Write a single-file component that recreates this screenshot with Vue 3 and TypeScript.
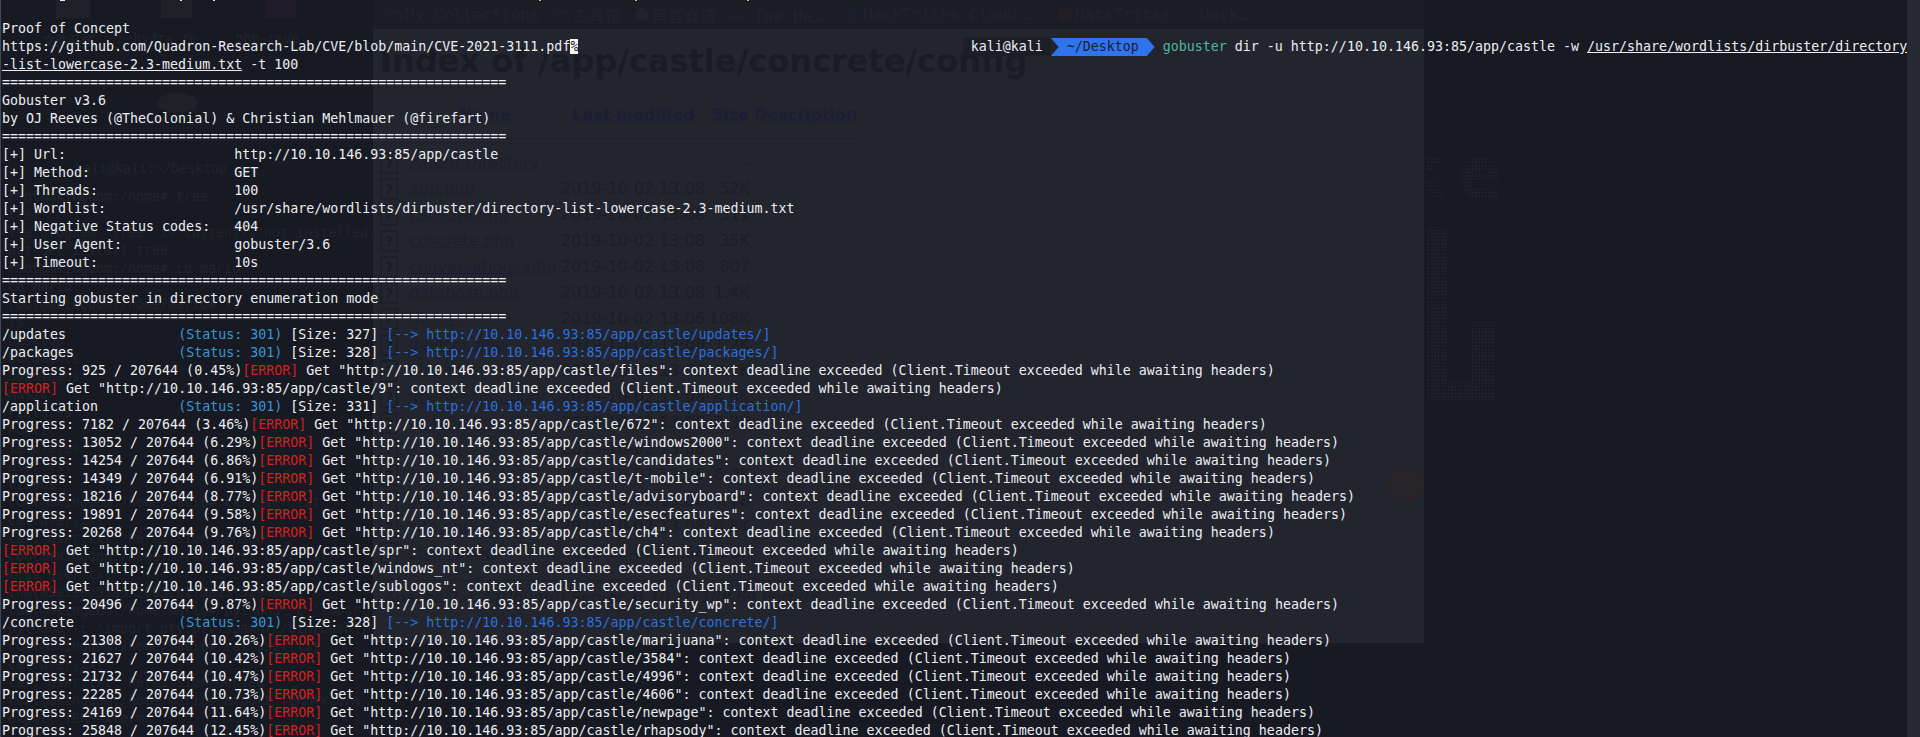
<script setup lang="ts">
type Seg = { c: string; t: string };
type Line = Seg[];

const rule = "=".repeat(63);
const plain = (t: string): Line => [{ c: "", t }];
const base = "http://10.10.146.93:85/app/castle";

const found = (name: string, size: number): Line => [
  { c: "", t: name.padEnd(22) },
  { c: "st", t: "(Status: 301)" },
  { c: "", t: ` [Size: ${size}] ` },
  { c: "lk", t: `[--> ${base}/${name.slice(1)}/]` },
];
const tail = (p: string) =>
  ` Get "${base}/${p}": context deadline exceeded (Client.Timeout exceeded while awaiting headers)`;
const err = (p: string): Line => [{ c: "er", t: "[ERROR]" }, { c: "", t: tail(p) }];
const prog = (n: number, pct: string, p: string): Line => [
  { c: "", t: `Progress: ${n} / 207644 (${pct}%)` },
  ...err(p),
];

const afterPrompt: Line[] = [
  [
    { c: "ul", t: "-list-lowercase-2.3-medium.txt" },
    { c: "", t: " -t 100" },
  ],
  plain(rule),
  plain("Gobuster v3.6"),
  plain("by OJ Reeves (@TheColonial) & Christian Mehlmauer (@firefart)"),
  plain(rule),
  plain("[+] Url:                     " + base),
  plain("[+] Method:                  GET"),
  plain("[+] Threads:                 100"),
  plain("[+] Wordlist:                /usr/share/wordlists/dirbuster/directory-list-lowercase-2.3-medium.txt"),
  plain("[+] Negative Status codes:   404"),
  plain("[+] User Agent:              gobuster/3.6"),
  plain("[+] Timeout:                 10s"),
  plain(rule),
  plain("Starting gobuster in directory enumeration mode"),
  plain(rule),
  found("/updates", 327),
  found("/packages", 328),
  prog(925, "0.45", "files"),
  err("9"),
  found("/application", 331),
  prog(7182, "3.46", "672"),
  prog(13052, "6.29", "windows2000"),
  prog(14254, "6.86", "candidates"),
  prog(14349, "6.91", "t-mobile"),
  prog(18216, "8.77", "advisoryboard"),
  prog(19891, "9.58", "esecfeatures"),
  prog(20268, "9.76", "ch4"),
  err("spr"),
  err("windows_nt"),
  err("sublogos"),
  prog(20496, "9.87", "security_wp"),
  found("/concrete", 328),
  prog(21308, "10.26", "marijuana"),
  prog(21627, "10.42", "3584"),
  prog(21732, "10.47", "4996"),
  prog(22285, "10.73", "4606"),
  prog(24169, "11.64", "newpage"),
  prog(25848, "12.45", "rhapsody"),
];

const ghostTerm: string[] = [
  "root@mkingdom:/home# tree",
  "tree",
  "The program 'tree' is currently not installed. You can",
  "apt-get install tree",
  "root@mkingdom:/home# cd mario",
  "cd mario",
  "root@mkingdom:/home/mario# ls",
  "ls",
  "Desktop",
  "Documents",
  "Downloads",
  "Music",
  "Pictures",
  "Public",
  "Templates",
  "user.txt",
  "Videos",
  "root@mkingdom:/home/mario# cat user.txt",
  "cat user.txt",
  "cat: user.txt: Permission denied",
  "root@mkingdom:/home/mario# less user.txt",
  "less user.txt",
  "thm{03a1e0b91a5f26b52b1f0a13f5294b6c}",
  "root@mkingdom:/home/mario# python3 -c 'import",
  "python3 -c 'import pty;pty.spawn(\"/bin/bash\")'",
  "root@mkingdom:/home/mario# cat user.txt",
  "cat user.txt",
  "cat: user.txt: Permission denied",
  "root@mkingdom:/home/mario# export TERM=xterm",
  "export TERM=xterm",
];

const rows: [string, string, string][] = [
  ["Parent Directory", "", "-"],
  ["app.php", "2019-10-02 13:08", "52K"],
  ["captcha.php", "2019-10-02 13:08", "311"],
  ["concrete.php", "2019-10-02 13:08", "35K"],
  ["conversations.php", "2019-10-02 13:08", "807"],
  ["database.php", "2019-10-02 13:08", "1.4K"],
  ["db.xml", "2019-10-02 13:06", "108K"],
  ["devices.php", "2019-10-02 13:08", "1.2K"],
  ["files.php", "2019-10-02 13:08", "2.1K"],
  ["imageeditor.php", "2019-10-02 13:08", "4.8K"],
  ["install.php", "2019-10-02 13:08", "2.3K"],
  ["install/", "2019-10-02 13:08", "-"],
  ["mime.ico", "2019-10-02 13:06", "6.4K"],
  ["services.php", "2019-10-02 13:08", "128"],
  ["site.php", "2019-10-02 13:08", "6.8K"],
  ["stacks.php", "2019-10-02 13:08", "107"],
];

const frags: { x: number; w: number; col: string }[] = [
  { x: 60, w: 5, col: "#e9ebef" },
  { x: 180, w: 2, col: "#e9ebef" },
  { x: 213, w: 2, col: "#e9ebef" },
  { x: 539, w: 2, col: "#e6b070" },
  { x: 635, w: 2, col: "#e6b070" },
  { x: 747, w: 2, col: "#e6b070" },
];
</script>

<template>
  <div class="desk">
    <!-- faint windows behind the translucent terminal -->
    <div class="wallpaper">
      <span class="sc sc1"></span>
      <span class="sc sc2"></span>
      <span class="sc sc3"></span>
      <span class="sc sc4"></span>
      <div class="sc-labels"><span>文件系统</span><span>hydra_re</span><span>php-reve</span></div>
    </div>

    <svg class="art" width="100" height="260" viewBox="0 0 100 260" aria-hidden="true">
      <defs>
        <pattern id="dots" width="3.4" height="3.4" patternUnits="userSpaceOnUse">
          <rect x="0" y="0" width="1.7" height="1.7" fill="#21242c" />
        </pattern>
      </defs>
      <path fill="url(#dots)" d="M3 0h14v7H9v6H3zM3 24h8l7 10v6h-6L3 30zM42 3c6-4 22-4 30 0l3 8v13H48v6l27 2v6c-10 3-25 3-31 0l-6-10V12zM49 12v5h15v-5z" />
      <path fill="url(#dots)" d="M2 69H24V222H46V164H70V242H2Z" />
    </svg>

    <div class="ghost-term">
      <div class="gt-title">kali@kali:~/Desktop</div>
      <div v-for="(l, i) in ghostTerm" :key="i" class="gt-line">{{ l }}</div>
    </div>

    <div class="browser">
      <div class="bookmarks">
        <span class="bm">
          <svg class="fold" width="16" height="14" viewBox="0 0 16 14"><path d="M1 2.5h5l1.5 2H15v8.5H1z" /></svg>
          My Collections
        </span>
        <span class="bm">
          <svg class="fold" width="16" height="14" viewBox="0 0 16 14"><path d="M1 2.5h5l1.5 2H15v8.5H1z" /></svg>
          工具箱
        </span>
        <span class="bm bm3"><i class="fav"></i>黑客食谱 —— The Ha…</span>
        <span class="bm bm4"><i class="fav fav-b"></i>HackTricks Cloud …</span>
        <span class="bm"><i class="fav fav-r"></i>HackTricks - Hack…</span>
      </div>
      <div class="page">
        <h1 class="g-h1">Index of /app/castle/concrete/config</h1>
        <div class="g-row g-head">
          <span></span><a class="c">Name</a><a class="c">Last modified</a><a class="c">Size</a><a class="c">Description</a>
        </div>
        <div class="g-rule"></div>
        <div v-for="r in rows" :key="r[0]" class="g-row">
          <span class="g-ico">?</span>
          <a>{{ r[0] }}</a>
          <span>{{ r[1] }}</span>
          <span class="r">{{ r[2] }}</span>
          <span></span>
        </div>
        <div class="g-rule g-rule2"></div>
        <div class="g-addr">Apache/2.4.7 (Ubuntu) Server at 10.10.188.69 Port 85</div>
        <span class="g-dot"></span>
      </div>
    </div>

    <div class="edge"></div>

    <pre class="term"><div class="ln">Proof of Concept</div><div class="ln">https://github.com/Quadron-Research-Lab/CVE/blob/main/CVE-2021-3111.pdf<span class="cursor">%</span>{{ " ".repeat(48) }}<span class="who"> kali@kali </span><span class="path">~/Desktop</span> <span class="cmd">gobuster</span> dir -u {{ base }} -w <span class="ul">/usr/share/wordlists/dirbuster/directory</span></div><div v-for="(l, i) in afterPrompt" :key="i" class="ln"><span v-for="(s, j) in l" :key="j" :class="s.c">{{ s.t }}</span></div></pre>

    <i v-for="f in frags" :key="f.x" class="frag" :style="{ left: f.x + 'px', width: f.w + 'px', background: f.col }"></i>
  </div>
</template>

<style scoped>
.desk {
  position: relative;
  width: 1920px;
  height: 737px;
  overflow: hidden;
  background: #171a22;
}
.edge {
  position: absolute;
  left: 0;
  top: 0;
  bottom: 0;
  width: 1px;
  background: #45484e;
}
.desk::after {
  content: "";
  position: absolute;
  right: 0;
  top: 0;
  bottom: 0;
  width: 13px;
  background: #262932;
}
.frag {
  position: absolute;
  top: 0;
  height: 1px;
}
.wallpaper {
  position: absolute;
  left: 0;
  top: 0;
  width: 373px;
  font: 13.3px "DejaVu Sans Mono", monospace;
  color: #21242c;
}
.sc {
  position: absolute;
  top: 0;
  height: 18px;
  background: #1e2128;
}
.sc1 {
  left: 56px;
  width: 34px;
}
.sc2 {
  left: 161px;
  width: 31px;
}
.sc3 {
  left: 265px;
  width: 31px;
  background: #1f1b2b;
}
.sc4 {
  left: 157px;
  top: 93px;
  width: 41px;
  height: 20px;
  border-radius: 50%;
}
.sc-labels {
  position: absolute;
  top: 31px;
  left: 42px;
  display: flex;
  gap: 38px;
  white-space: nowrap;
  font-family: "DejaVu Sans Mono", "Noto Sans CJK SC", monospace;
}
.art {
  position: absolute;
  left: 1424px;
  top: 158px;
}
.ghost-term {
  position: absolute;
  left: 8px;
  top: 160px;
  font: 13.3px/18px "DejaVu Sans Mono", monospace;
  color: #21242c;
  white-space: pre;
}
.gt-title {
  padding-left: 67px;
  height: 28px;
}
.gt-line {
  height: 18px;
}
.browser {
  position: absolute;
  left: 373px;
  top: 0;
  width: 1051px;
}
.bookmarks {
  height: 29px;
  display: flex;
  align-items: center;
  gap: 14px;
  padding-left: 13px;
  background: #1a1d25;
  font: 16px "DejaVu Sans Mono", "Noto Sans CJK SC", monospace;
  color: #20232b;
  white-space: nowrap;
  overflow: hidden;
}
.bm {
  display: flex;
  align-items: center;
  gap: 3px;
}
.bm3 {
  width: 197px;
}
.bm4 {
  width: 198px;
}
.fold {
  fill: none;
  stroke: #20232b;
  stroke-width: 1;
}
.fav {
  width: 14px;
  height: 14px;
  border-radius: 50%;
  background: #1f2229;
}
.fav-b {
  background: #1a1d2a;
  border-radius: 2px;
}
.fav-r {
  background: #231d24;
  border-radius: 2px;
}
.page {
  position: relative;
  height: 614px;
  background: #22252d;
  padding: 12px 0 0 7px;
  box-sizing: border-box;
  font: 16px "DejaVu Sans", sans-serif;
  color: #1b1e26;
  overflow: hidden;
}
.g-h1 {
  margin: 0;
  font: 700 32px/40px "DejaVu Sans", sans-serif;
  color: #191c24;
  white-space: nowrap;
}
.g-row {
  display: grid;
  grid-template-columns: 29px 152px 145px 48px 101px;
  height: 26px;
  line-height: 26px;
  width: 475px;
  white-space: nowrap;
}
.g-row a {
  color: #1c1f2e;
  text-decoration: underline;
}
.g-head {
  margin-top: 21px;
  font-weight: 700;
}
.g-head a {
  color: #1b1e34;
}
.c {
  text-align: center;
}
.r {
  text-align: right;
  padding-right: 4px;
}
.g-rule {
  height: 1px;
  width: 475px;
  margin: 10px 0 11px;
  background: #1c1f27;
}
.g-rule2 {
  margin: 14px 0 7px;
}
.g-ico {
  box-sizing: border-box;
  width: 18px;
  height: 22px;
  margin-top: 2px;
  border: 2px solid #1c1f27;
  text-align: center;
  font-weight: 700;
  font-size: 14px;
  line-height: 18px;
  color: #191c24;
}
.g-addr {
  font-style: italic;
  margin-left: 4px;
  white-space: nowrap;
}
.g-dot {
  position: absolute;
  left: 1015px;
  top: 438px;
  width: 36px;
  height: 36px;
  border-radius: 50%;
  background: #282429;
}
.term {
  position: relative;
  margin: 0;
  padding: 20px 0 0 2px;
  font: 13.3px/18px "DejaVu Sans Mono", monospace;
  color: #eceef2;
  white-space: pre;
}
.ln {
  height: 18px;
}
.cursor {
  background: #f4f4f4;
  color: #1a1d25;
}
.ul {
  text-decoration: underline;
}
.who {
  background: #1c1f27;
  display: inline-block;
  height: 18px;
  vertical-align: top;
}
.path {
  display: inline-block;
  box-sizing: border-box;
  width: 104px;
  height: 18px;
  padding-left: 16px;
  vertical-align: top;
  background: #2f74ec;
  color: #19202e;
  clip-path: polygon(0 0, 96px 0, 104px 50%, 96px 100%, 0 100%, 8px 50%);
}
.cmd {
  color: #4fb79b;
}
.st {
  color: #3a97d4;
}
.lk {
  color: #2f6fdc;
}
.er {
  color: #d3201f;
}
</style>
